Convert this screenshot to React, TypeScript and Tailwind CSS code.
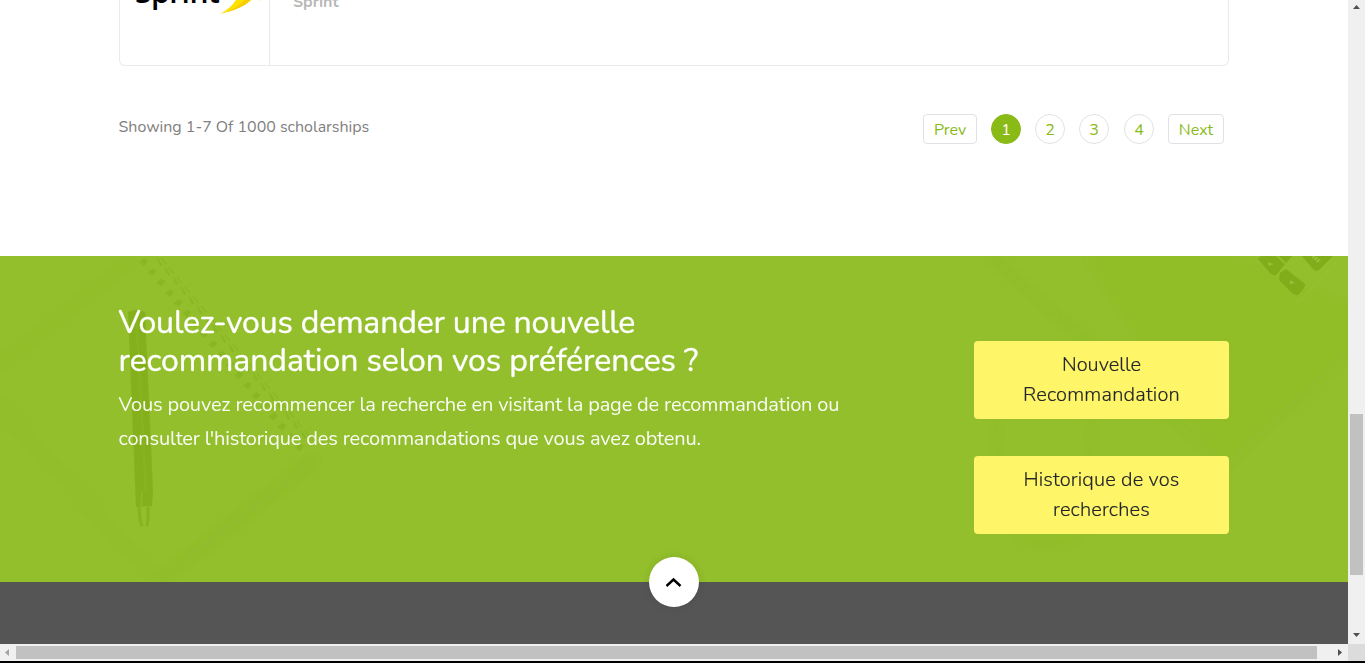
const rings = Array.from({ length: 19 }, (_, i) => i);

function DeskBackdrop() {
  return (
    <svg className="absolute inset-0 h-full w-full" viewBox="0 0 1348 326" preserveAspectRatio="none" aria-hidden="true">
      <defs>
        <filter id="soft" x="-20%" y="-20%" width="140%" height="140%">
          <feGaussianBlur stdDeviation="3" />
        </filter>
        <filter id="fine" x="-20%" y="-20%" width="140%" height="140%">
          <feGaussianBlur stdDeviation="0.6" />
        </filter>
      </defs>
      <g filter="url(#soft)" fill="none" stroke="#86b520" strokeWidth="5">
        <path d="M0 108L132 4" opacity="0.1" />
        <path d="M-4 146L158 326" opacity="0.18" />
        <path d="M160 324L314 204" strokeWidth="9" opacity="0.2" />
        <path d="M990 0L1095 93L1225 210L1348 95" opacity="0.2" />
        <path d="M1085 0L1240 0L1348 50L1348 90L1220 205Z" fill="#86b520" stroke="none" opacity="0.1" />
        <path d="M996 165Q1000 275 1030 285Q1070 295 1088 270L1092 160" opacity="0.12" />
      </g>
      <g stroke="#7dab18" opacity="0.42" filter="url(#fine)">
        {rings.map((i) => (
          <g key={i}>
            <path d={`M${140 + i * 8.65} ${7 + i * 10.3}l5 -4m-2 6l4 -5m-4 5l2 -5`} strokeWidth="2.4" />
            <path d={`M${157 + i * 8} ${2 + i * 9.6}l5 7m-1 -7l5 6m-8 -3l3 5`} strokeWidth="1.2" opacity="0.8" />
          </g>
        ))}
      </g>
      <g filter="url(#fine)">
        <path d="M128 56Q136 52 145 56L153 235L152 250L136 251Z" fill="#81ae1b" opacity="0.85" />
        <path d="M136 57L146 235" stroke="#8bb926" strokeWidth="2" opacity="0.5" />
        <path d="M142 236L141 250" stroke="#8bb926" strokeWidth="2" />
        <path d="M139 251L140 263L142 270M148 251L148 263L147 270" stroke="#81ae1b" strokeWidth="3" fill="none" opacity="0.7" />
        <g fill="#7faa18" opacity="0.85">
          <path d="M1258 3L1261 0L1292 0L1276 19Q1273 20 1270 17Z" />
          <path d="M1280 17L1286 13L1305 28Q1306 31 1298 39Q1295 40 1291 36L1279 24Z" />
          <path d="M1302 0L1333 0L1319 14Q1316 16 1313 13Z" />
        </g>
        <path d="M1276 -1L1286 8" stroke="#92bf2c" strokeWidth="2" />
        <path d="M1268 6L1273 8L1269 10ZM1290 24L1295 27L1290 28Z" fill="#98c43c" />
        <path d="M1313 0L1320 6" stroke="#98c43c" strokeWidth="4" strokeDasharray="2 1" />
        <path d="M1343 0L1299 46L1295 45" fill="none" stroke="#98c43a" strokeWidth="3" opacity="0.4" />
      </g>
    </svg>
  );
}

function ScholarshipCard() {
  return (
    <div className="flex h-[66px] w-[1110px] overflow-hidden rounded-b-md border-x border-b border-[#e9ebee]">
      <div className="relative w-[150px] border-r border-[#e6e7e9]">
        <span className="absolute top-[-26px] left-[15px] font-['Open_Sans',sans-serif] text-[30px] leading-[36px] font-semibold tracking-[-0.5px] text-black">Sprint</span>
        <svg className="absolute top-0 left-[98px]" width="44" height="15" viewBox="0 0 44 15" aria-hidden="true">
          <path d="M18 0L33 0Q25 8 2 14Q13 8 18 0Z" fill="#ffe100" />
          <path d="M27 0L33 0Q25 8 9 12Q20 7 27 0Z" fill="#f8cc08" />
          <path d="M40 0L43 1L41 1Z" fill="#fff08a" />
        </svg>
      </div>
      <div className="pl-[23px]">
        <div className="-mt-[10px] text-[16px] leading-[24px] font-bold text-[#b8b8b8]">Sprint</div>
      </div>
    </div>
  );
}

const circle = "flex h-[30px] w-[30px] items-center justify-center rounded-full border pt-[2px] text-base";
const box = "flex h-[30px] items-center justify-center rounded border border-[#dee2e6] pt-[2px] text-base";

function Pagination() {
  return (
    <nav className="mr-[5px] flex text-[#89ba16]">
      <a className={box + " mr-[14px] w-[54px]"}>Prev</a>
      <a className={circle + " mr-[14px] border-[#89ba16] bg-[#89ba16] text-white"}>1</a>
      <a className={circle + " mr-[14px] border-[#dee2e6]"}>2</a>
      <a className={circle + " mr-[15px] border-[#dee2e6]"}>3</a>
      <a className={circle + " mr-[14px] border-[#dee2e6]"}>4</a>
      <a className={box + " w-[56px]"}>Next</a>
    </nav>
  );
}

const button =
  "flex h-[78px] w-[255px] flex-col items-center justify-center rounded bg-[#fff568] pb-px text-[20px] leading-[30px] text-[#212529] [-webkit-text-stroke:0.15px_#212529]";

export default function App() {
  return (
    <div className="flex h-[663px] w-[1365px] flex-col overflow-hidden border-b-2 border-black bg-white font-[Nunito,Lato,sans-serif]">
      <div className="flex h-[644px]">
        <main className="flex w-[1348px] flex-col">
          <section className="h-[256px] pl-[119px]">
            <ScholarshipCard />
            <div className="mt-[48px] flex w-[1110px] justify-between">
              <p className="-ml-[0.5px] whitespace-nowrap text-[16px] leading-[26px] tracking-[-0.02px] text-[#808080]">Showing 1-7 Of 1000 scholarships</p>
              <Pagination />
            </div>
          </section>
          <section className="relative h-[326px] bg-[#92bf2b]">
            <DeskBackdrop />
            <div className="relative flex justify-between pr-[119px] pl-[118.5px]">
              <div className="pt-[48px] whitespace-nowrap text-white">
                <h2 className="text-[32px] leading-[38px] [-webkit-text-stroke:0.35px_white]">
                  <span className="block w-fit tracking-[-0.17px]">Voulez-vous demander une nouvelle</span>
                  <span className="block w-fit tracking-[-0.08px]">recommandation selon vos préférences ?</span>
                </h2>
                <p className="mt-[8px] text-[20px] leading-[34px] text-white/95">
                  <span className="block w-fit tracking-[-0.165px]">Vous pouvez recommencer la recherche en visitant la page de recommandation ou</span>
                  <span className="block w-fit tracking-[-0.165px]">consulter l'historique des recommandations que vous avez obtenu.</span>
                </p>
              </div>
              <div className="flex flex-col gap-[37px] pt-[85px]">
                <button className={button}>
                  <span className="font-light">Nouvelle</span>
                  <span className="font-light tracking-[0.2px]">Recommandation</span>
                </button>
                <button className={button}>
                  <span className="font-light tracking-[0.15px]">Historique de vos</span>
                  <span className="font-light tracking-[0.15px]">recherches</span>
                </button>
              </div>
            </div>
          </section>
          <footer className="relative flex h-[62px] justify-center bg-[#555555]">
            <a className="absolute -top-[25px] flex h-[50px] w-[50px] items-center justify-center rounded-full bg-white shadow-[0_0_8px_rgba(0,0,0,0.1)]">
              <svg width="16" height="11" viewBox="0 0 16 11" fill="none" aria-hidden="true">
                <path d="M0.5 9L7.5 2.5L14.5 9" stroke="#000" strokeWidth="2.4" />
              </svg>
            </a>
          </footer>
        </main>
        <aside className="flex w-[17px] flex-col items-center bg-[#f0f0f0]">
          <svg width="17" height="17" viewBox="0 0 17 17" aria-hidden="true">
            <path d="M5 9L8.5 5L12 9Z" fill="#505050" />
          </svg>
          <div className="mt-[397px] mr-px h-[161px] w-[13px] bg-[#c1c1c1]" />
          <svg className="mt-[52px]" width="17" height="17" viewBox="0 0 17 17" aria-hidden="true">
            <path d="M5 6L8.5 10L12 6Z" fill="#505050" />
          </svg>
        </aside>
      </div>
      <div className="flex h-[17px] items-center bg-[#f0f0f0]">
        <svg width="16" height="17" viewBox="0 0 16 17" aria-hidden="true">
          <path d="M9 5L5 8.5L9 12Z" fill="#a3a3a3" />
        </svg>
        <div className="h-[13px] w-[1301px] bg-[#c1c1c1]" />
        <svg className="ml-[16px]" width="15" height="17" viewBox="0 0 15 17" aria-hidden="true">
          <path d="M5 5L9 8.5L5 12Z" fill="#505050" />
        </svg>
        <div className="h-full w-[17px] bg-[#dcdcdc]" />
      </div>
    </div>
  );
}
